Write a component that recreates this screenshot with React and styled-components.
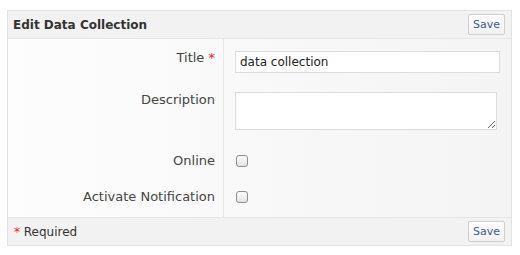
import React from "react";
import styled, { createGlobalStyle } from "styled-components";

const GlobalStyle = createGlobalStyle`
  body {
    margin: 0;
    background: #fff;
    font-family: "DejaVu Sans", Verdana, sans-serif;
    font-size: 12px;
    color: #333;
  }
`

const Panel = styled.div`
  margin: 10px 0 0 7px;
  width: 503px;
  border: 1px solid #e3e3e3;
  background: #f2f2f2;
`

const Bar = styled.div`
  display: flex;
  align-items: center;
  justify-content: space-between;
  height: ${p => p.h}px;
  padding: 0 6px 0 5px;
  border-${p => p.side}: 1px solid #e6e6e6;
`

const Heading = styled.h3`
  margin: 0;
  font-size: 12px;
  font-weight: bold;
  color: #333;
`

const SaveButton = styled.button`
  height: 21px;
  width: 37px;
  padding: 0;
  border: 1px solid #cfcfcf;
  border-radius: 2px;
  background: linear-gradient(#ffffff, #f1f1f1);
  color: #3b5b9b;
  font-family: "DejaVu Sans", Verdana, sans-serif;
  font-size: 11px;
`

const Body = styled.div`
  display: grid;
  grid-template-columns: 216px 1fr;
  background: linear-gradient(to right, #fdfdfd, #f4f4f4);
`

const Label = styled.div`
  text-align: right;
  padding: ${p => p.pt}px 8px 0 0;
  font-size: 13px;
  line-height: 16px;
  color: #444;
  border-right: 1px solid #e6e6e6;
  height: ${p => p.h}px;
  box-sizing: border-box;
`

const Field = styled.div`
  padding: ${p => p.pt}px 11px 0 11px;
  height: ${p => p.h}px;
  box-sizing: border-box;
`

const Star = styled.span`
  color: #f22;
`

const TextInput = styled.input`
  box-sizing: border-box;
  width: 265px;
  height: 22px;
  margin: 0;
  padding: 0 4px;
  border: 1px solid #dcdcdc;
  background: #fff;
  font-family: "DejaVu Sans", Verdana, sans-serif;
  font-size: 12px;
  color: #222;
  outline: none;
`

const TextArea = styled.textarea`
  box-sizing: border-box;
  display: block;
  width: 262px;
  height: 38px;
  margin: 0;
  border: 1px solid #dcdcdc;
  background: #fff;
  outline: none;
`

const Check = styled.input`
  appearance: none;
  display: block;
  width: 12px;
  height: 12px;
  margin: 0 0 0 1px;
  border: 1px solid #8f8f8f;
  border-radius: 3px;
  background: linear-gradient(#fdfdfd, #e4e4e4);
`

const Note = styled.span`
  padding-left: 1px;
`

const rows = [
  { label: "Title", req: true, h: 44, lp: 11, fp: 12, kind: "text" },
  { label: "Description", h: 58, lp: 9, fp: 9, kind: "area" },
  { label: "Online", h: 37, lp: 12, fp: 14, kind: "check" },
  { label: "Activate Notification", h: 39, lp: 11, fp: 13, kind: "check" },
]

export default function App() {
  return (
    <>
      <GlobalStyle />
      <Panel>
        <Bar h={27} side="bottom">
          <Heading>Edit Data Collection</Heading>
          <SaveButton>Save</SaveButton>
        </Bar>
        <Body>
          {rows.map(r => (
            <React.Fragment key={r.label}>
              <Label pt={r.lp} h={r.h}>
                {r.label}{r.req && <> <Star>*</Star></>}
              </Label>
              <Field pt={r.fp} h={r.h}>
                {r.kind === "text" && <TextInput defaultValue="data collection" />}
                {r.kind === "area" && <TextArea />}
                {r.kind === "check" && <Check type="checkbox" />}
              </Field>
            </React.Fragment>
          ))}
        </Body>
        <Bar h={27} side="top">
          <Note><Star>*</Star> Required</Note>
          <SaveButton>Save</SaveButton>
        </Bar>
      </Panel>
    </>
  )
}
